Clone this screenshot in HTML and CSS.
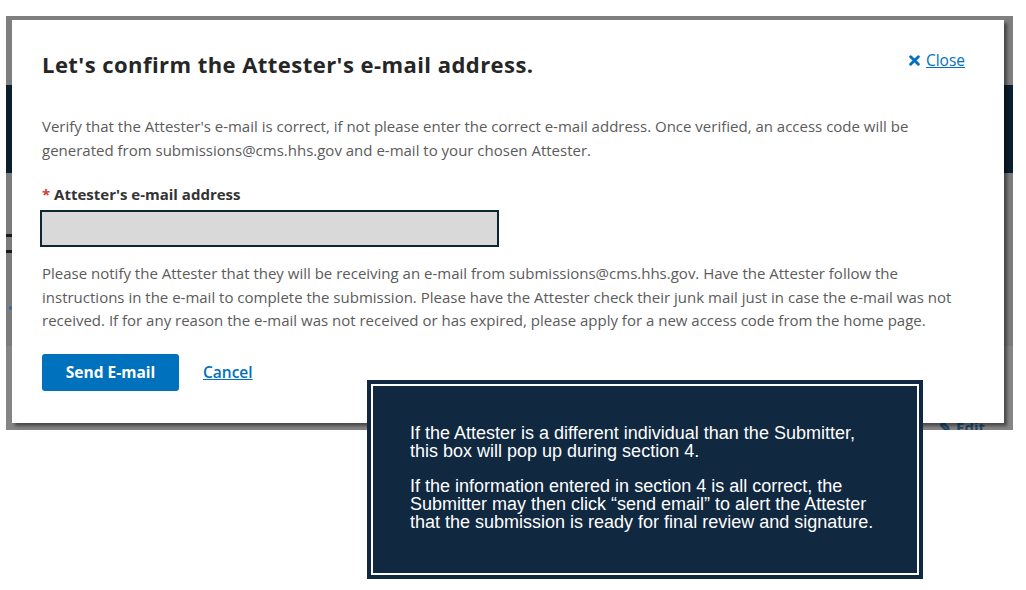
FILE: index.html
```html
<!DOCTYPE html>
<html lang="en">
<head>
<meta charset="utf-8">
<title>Confirm Attester e-mail</title>
<link rel="stylesheet" href="styles.css">
</head>
<body>
<div class="canvas">
  <div class="shot">
    <div class="bg-page">
      <div class="bg-top"></div>
      <div class="bg-band"></div>
      <div class="bg-mid">
        <span class="dash"></span>
        <span class="dash"></span>
        <span class="dot"></span>
      </div>
      <div class="bg-low"><span class="edit">&#9998; Edit</span></div>
    </div>
    <div class="modal">
      <div class="modal-head">
        <h1 class="modal-title">Let's confirm the Attester's e-mail address.</h1>
        <a class="close-link" href="#"><svg class="close-icon" viewBox="0 0 10 10" width="11" height="11"><path d="M1.5 1.5 L8.5 8.5 M8.5 1.5 L1.5 8.5" stroke="#0071bc" stroke-width="2.6" stroke-linecap="round"/></svg><span class="close-text">Close</span></a>
      </div>
      <p class="modal-text intro">Verify that the Attester's e-mail is correct, if not please enter the correct e-mail address. Once verified, an access code will be generated from submissions@cms.hhs.gov and e-mail to your chosen Attester.</p>
      <label class="field-label" for="att-email"><span class="req">*</span> Attester's e-mail address</label>
      <input class="field-input" id="att-email" type="text">
      <p class="modal-text notice">Please notify the Attester that they will be receiving an e-mail from submissions@cms.hhs.gov. Have the Attester follow the instructions in the e-mail to complete the submission. Please have the Attester check their junk mail just in case the e-mail was not received. If for any reason the e-mail was not received or has expired, please apply for a new access code from the home page.</p>
      <div class="actions">
        <button class="btn-primary" type="button">Send E-mail</button>
        <a class="cancel-link" href="#">Cancel</a>
      </div>
    </div>
  </div>
  <div class="callout">
    <div class="callout-inner">
      <p>If the Attester is a different individual than the Submitter, this box will pop up during section 4.</p>
      <p>If the information entered in section 4 is all correct, the Submitter may then click “send email” to alert the Attester that the submission is ready for final review and signature.</p>
    </div>
  </div>
</div>
</body>
</html>
```

FILE: styles.css
```css
* { box-sizing: border-box; }
html, body { margin: 0; padding: 0; background: #ffffff; }
body { width: 1026px; height: 590px; overflow: hidden; font-family: "Open Sans", "Liberation Sans", sans-serif; }

.canvas { position: relative; width: 1026px; height: 590px; padding: 16px 0 0 6px; }

.shot { position: relative; width: 1007px; height: 414px; overflow: hidden; }

.bg-page { display: flex; flex-direction: column; height: 100%; background: #808080; }
.bg-top { height: 69px; background: #7f7f7f; }
.bg-band { height: 88px; background: #0a1e2e; }
.bg-mid { position: relative; height: 173px; background: #7c7c7c; display: flex; flex-direction: column; padding-top: 61px; gap: 13px; }
.dash { display: block; width: 6px; height: 3px; background: #1a1a1a; }
.dot { display: block; width: 3px; height: 4px; margin-top: 40px; margin-left: 3px; background: #3a6a98; border-radius: 2px; }
.bg-low { flex: 1; background: #858585; display: flex; justify-content: flex-end; align-items: flex-end; padding-right: 28px; }
.edit { font-family: "Open Sans", sans-serif; font-size: 15px; font-weight: 700; color: #1f4a6e; line-height: 18px; margin-bottom: -6px; }

.modal {
  position: absolute; left: 6px; top: 4px; width: 992px; height: 403px;
  background: #ffffff; padding: 29px 39px 0 30px;
  box-shadow: 3px 3px 3px rgba(0,0,0,0.45);
}
.modal-head { display: flex; justify-content: space-between; align-items: flex-start; }
.modal-title { margin: 0; font-size: 22px; line-height: 30px; font-weight: 700; color: #262626; letter-spacing: 0.45px; }
.close-link { display: flex; align-items: center; gap: 6px; margin-top: 1px; color: #0071bc; font-size: 15.5px; line-height: 20px; text-decoration: none; }
.close-icon { display: block; }
.close-text { text-decoration: underline; }

.modal-text { margin: 0; font-size: 15px; line-height: 23.5px; color: #5b5b5b; }
.intro { margin-top: 36px; }
.field-label { display: block; margin-top: 22px; font-size: 15px; line-height: 20px; font-weight: 700; color: #333333; }
.req { color: #d83933; }
.field-input { display: block; margin: 6px 0 0 -2px; width: 459px; height: 37px; border: 2px solid #0d2636; background: #d9d9d9; padding: 0 8px; font: inherit; }
.notice { margin-top: 15px; }

.actions { display: flex; align-items: center; gap: 24px; margin-top: 21px; }
.btn-primary { width: 137px; height: 37px; border: 0; border-radius: 3px; background: #0071bc; color: #ffffff; font-family: "Open Sans", sans-serif; font-size: 15.5px; font-weight: 700; }
.cancel-link { color: #0071bc; font-size: 15.5px; font-weight: 600; text-decoration: underline; }

.callout { position: absolute; left: 367px; top: 380px; width: 556px; height: 199px; padding: 4px; background: #102840; }
.callout-inner { height: 100%; border: 2px solid #ffffff; background: #102840; padding: 38px 37px 0 37px; }
.callout-inner p { margin: 0 0 17px; font-family: "Liberation Sans", Arial, sans-serif; font-size: 18px; line-height: 18px; color: #ffffff; }
```
